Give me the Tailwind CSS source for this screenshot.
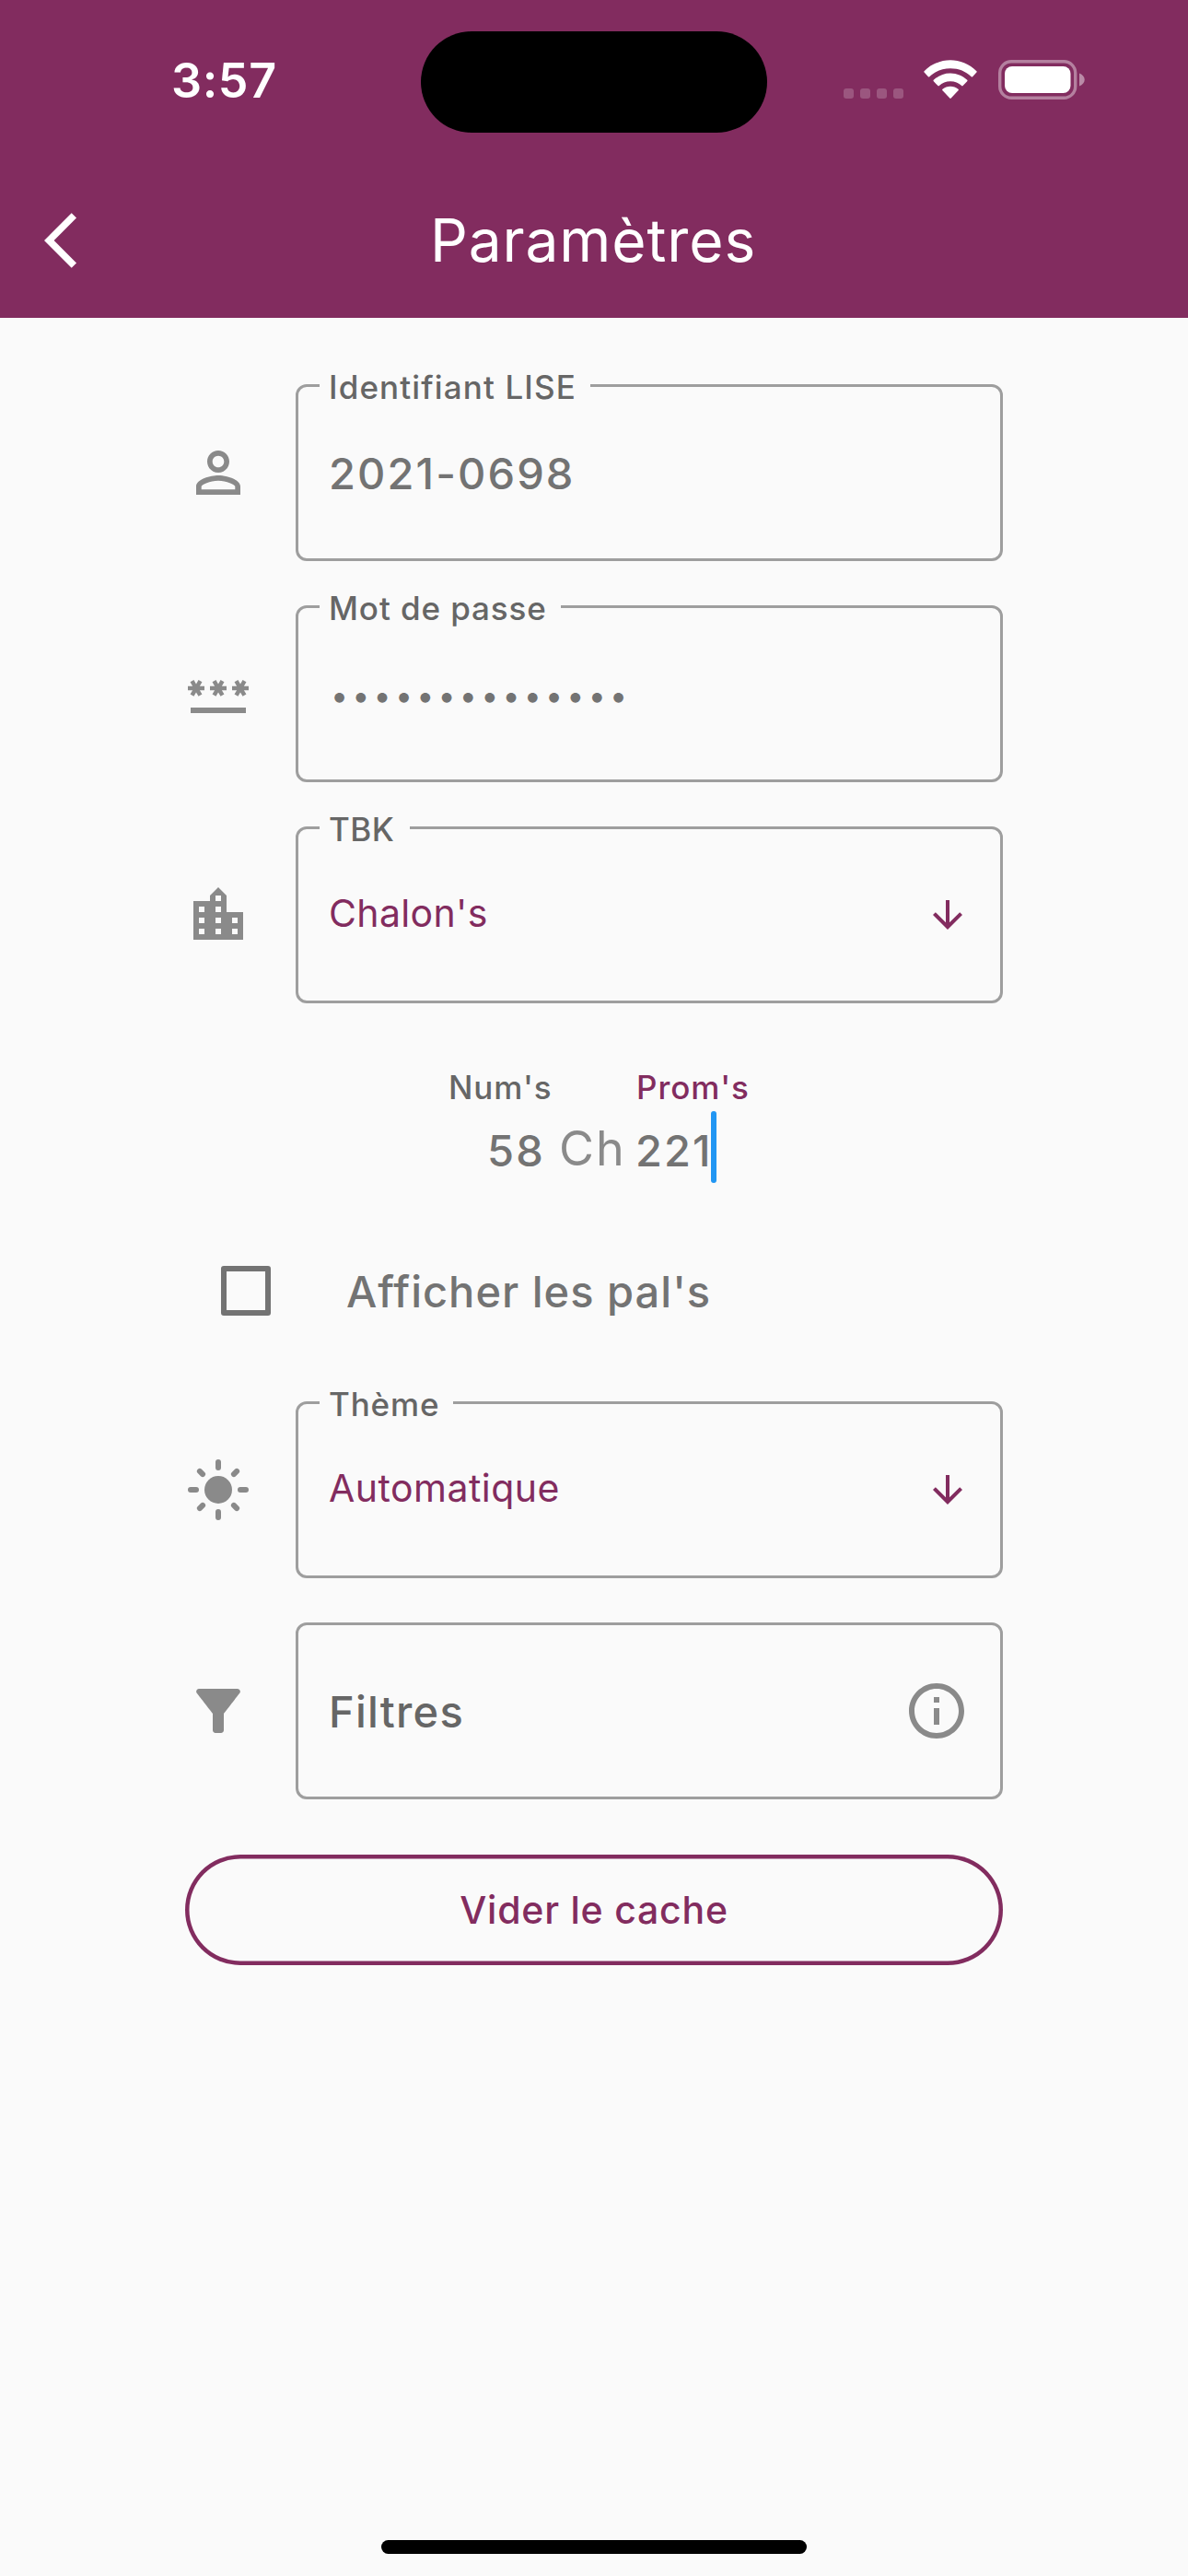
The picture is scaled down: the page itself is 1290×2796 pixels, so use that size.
<!DOCTYPE html>
<html lang="fr">
<head>
<meta charset="utf-8">
<title>Paramètres</title>
<script src="https://cdn.jsdelivr.net/npm/@tailwindcss/browser@4"></script>
</head>
<body class="bg-[#fafafa] font-['Inter',sans-serif] text-[#737373]">
<div class="relative flex h-[2796px] w-[1290px] flex-col overflow-hidden">
  <header class="h-[345px] shrink-0 bg-[#822c5f] text-white">
    <!-- Status bar -->
    <div class="flex h-[177px] items-start">
      <div class="mt-[62px] w-[271px] pl-[186px] text-[52px] font-semibold leading-none tracking-[0.6px]">3:57</div>
      <div class="ml-[186px] mt-[34px] h-[110px] w-[376px] rounded-full bg-black"></div>
      <div class="ml-[83px] mt-24 flex gap-[7px]">
        <i class="size-[11px] rounded-[3px] bg-white/20"></i>
        <i class="size-[11px] rounded-[3px] bg-white/20"></i>
        <i class="size-[11px] rounded-[3px] bg-white/20"></i>
        <i class="size-[11px] rounded-[3px] bg-white/20"></i>
      </div>
      <svg class="ml-[22px] mt-[65px] h-[42px] w-[58px]" viewBox="0 0 58 42" fill="#fff">
        <path d="M29 .2C19.200.2 8.200 4.300.6 12.200a1 1 0 0 0 0 1.400l4.300 4.600a1 1 0 0 0 1.400 0C12 12.500 20 9.200 29 9.200s17 3.300 22.700 9a1 1 0 0 0 1.400 0l4.300-4.600a1 1 0 0 0 0-1.400C49.800 4.300 38.800.2 29 .2z"/>
        <path d="M29 14.400c-7 0-13.400 2.800-18.200 7.400a1 1 0 0 0 0 1.400l4.600 4.900a1 1 0 0 0 1.400 0C20 25.100 24.300 23.300 29 23.300s9 1.800 12.200 4.800a1 1 0 0 0 1.400 0l4.600-4.900a1 1 0 0 0 0-1.400C42.400 17.200 36 14.400 29 14.400z"/>
        <path d="M29 28.700c-3.200 0-6.200 1.100-8.500 3.100a1 1 0 0 0 0 1.500L28.300 41.600a1 1 0 0 0 1.400 0l7.800-8.300a1 1 0 0 0 0-1.500C35.200 29.800 32.200 28.700 29 28.700z"/>
      </svg>
      <svg class="ml-[23px] mt-[65px] h-[43px] w-[94px]" viewBox="0 0 94 43">
        <rect x="1.700" y="1.700" width="82" height="39.600" rx="12.500" fill="none" stroke="#fff" stroke-opacity=".4" stroke-width="3.400"/>
        <rect x="7" y="7" width="71.500" height="29" rx="8" fill="#fff"/>
        <path d="M88 14.500c3.600 1.400 5.700 4 5.700 7s-2.100 5.600-5.700 7z" fill="#fff" fill-opacity=".45"/>
      </svg>
    </div>
    <!-- App bar -->
    <div class="flex h-[168px] items-center">
      <svg class="ml-12 size-[72px]" viewBox="0 0 24 24" fill="#fff"><path d="M11.670 3.870L9.900 2.100 0 12l9.900 9.900 1.770-1.770L3.540 12z"/></svg>
      <h1 class="ml-[347px] text-[64px] leading-none tracking-[0.88px]">Paramètres</h1>
    </div>
  </header>

  <main class="flex w-[1089px] flex-col pl-[201px] pt-[72px]">
    <div class="flex items-center gap-12">
      <svg class="size-[72px]" viewBox="0 0 24 24" fill="#8a8a8a"><path d="M12 5.900c1.160 0 2.100.940 2.100 2.100s-.940 2.100-2.100 2.100S9.900 9.160 9.900 8s.940-2.100 2.100-2.100m0 9c2.970 0 6.100 1.460 6.100 2.100v1.100H5.900V17c0-.640 3.130-2.100 6.100-2.100M12 4C9.790 4 8 5.790 8 8s1.790 4 4 4 4-1.790 4-4-1.790-4-4-4zm0 9c-2.670 0-8 1.340-8 4v3h16v-3c0-2.660-5.330-4-8-4z"/></svg>
      <div class="relative h-[192px] w-[768px] rounded-xl border-3 border-[#9e9e9e] pl-[33px] pt-[70px]">
        <label class="absolute -top-[17px] left-[23px] w-[294px] bg-[#fafafa] pl-[10px] text-[35px] font-medium leading-none tracking-[1.13px] text-[#666]">Identifiant LISE</label>
        <div class="text-[47px] font-medium leading-none tracking-[2.1px]">2021-0698</div>
      </div>
    </div>

    <div class="mt-12 flex items-center gap-12">
      <svg class="size-[72px]" viewBox="0 0 24 24" fill="#8a8a8a"><path d="M2 17h20v2H2zM3.150 12.950L4 11.470l.850 1.480 1.300-.750-.850-1.480H7v-1.500H5.300l.850-1.470L4.850 7 4 8.470 3.150 7l-1.300.750.850 1.470H1v1.500h1.700l-.850 1.480zM11.150 12.950l.850-1.480.850 1.480 1.300-.750-.850-1.480H15v-1.500h-1.700l.850-1.470L12.850 7 12 8.470 11.150 7l-1.300.750.850 1.470H9v1.500h1.700l-.850 1.480zM19.150 12.950l.850-1.480.850 1.480 1.300-.750-.850-1.480H23v-1.500h-1.700l.850-1.470L20.850 7 20 8.470 19.150 7l-1.300.750.850 1.470H17v1.500h1.700l-.850 1.480z"/></svg>
      <div class="relative h-[192px] w-[768px] rounded-xl border-3 border-[#9e9e9e] pl-[35px] pt-[78px]">
        <label class="absolute -top-[17px] left-[23px] w-[262px] bg-[#fafafa] pl-[10px] text-[35px] font-medium leading-none tracking-[0.9px] text-[#666]">Mot de passe</label>
        <div class="text-[34px] leading-none tracking-[4.18px]">••••••••••••••</div>
      </div>
    </div>

    <div class="mt-12 flex items-center gap-12">
      <svg class="size-[72px]" viewBox="0 0 24 24" fill="#8a8a8a"><path d="M15 11V5l-3-3-3 3v2H3v14h18V11h-6zm-8 8H5v-2h2v2zm0-4H5v-2h2v2zm0-4H5V9h2v2zm6 8h-2v-2h2v2zm0-4h-2v-2h2v2zm0-4h-2V9h2v2zm0-4h-2V5h2v2zm6 12h-2v-2h2v2zm0-4h-2v-2h2v2z"/></svg>
      <div class="relative flex h-[192px] w-[768px] items-start justify-between rounded-xl border-3 border-[#9e9e9e] px-[33px] text-[#822c5f]">
        <label class="absolute -top-[17px] left-[23px] w-[98px] bg-[#fafafa] pl-[10px] text-[35px] font-medium leading-none tracking-[0.4px] text-[#666]">TBK</label>
        <div class="mt-[71px] text-[41px] leading-none tracking-[0.35px]">Chalon's</div>
        <svg class="mt-[69px] size-12" viewBox="0 0 24 24" fill="currentColor"><path d="M20 12l-1.410-1.410L13 16.170V4h-2v12.170l-5.580-5.590L4 12l8 8 8-8z"/></svg>
      </div>
    </div>

    <!-- Num's / Prom's -->
    <div class="mt-[74px] flex pl-[286px] text-[35px] font-medium leading-none">
      <label class="w-[204px] tracking-[0.9px] text-[#666]">Num's</label>
      <label class="tracking-[0.96px] text-[#822c5f]">Prom's</label>
    </div>
    <div class="mt-2 flex h-[78px] items-start pl-[328px] text-[47px] font-medium leading-none">
      <div class="mt-[19px] w-[78px] tracking-[2.1px]">58</div>
      <div class="mt-[15px] w-[83px] text-[52px] font-normal tracking-[2px] text-[#8a8a8a]">Ch</div>
      <div class="mt-[19px] w-[82px] tracking-[2px]">221</div>
      <div class="h-[78px] w-1.5 rounded-full bg-[#2196f3]"></div>
    </div>

    <div class="mt-[90px] flex h-[54px] items-start pl-[39px]">
      <div class="size-[54px] rounded-[3px] border-6 border-[#737373]"></div>
      <div class="ml-[82px] mt-1 text-[47px] font-medium leading-none tracking-[1.01px]">Afficher les pal's</div>
    </div>

    <div class="mt-[93px] flex items-center gap-12">
      <svg class="size-[72px]" viewBox="0 0 24 24" fill="#8a8a8a" stroke="#8a8a8a" stroke-width="2" stroke-linecap="round"><circle cx="12" cy="12" r="5" stroke="none"/><path d="M12 2v2M12 20v2M2 12h2M20 12h2M5.300 5.300l1.060 1.060M17.640 17.640l1.060 1.060M5.300 18.700l1.060-1.060M17.640 6.360l1.060-1.060"/></svg>
      <div class="relative flex h-[192px] w-[768px] items-start justify-between rounded-xl border-3 border-[#9e9e9e] px-[33px] text-[#822c5f]">
        <label class="absolute -top-[17px] left-[23px] w-[145px] bg-[#fafafa] pl-[10px] text-[35px] font-medium leading-none tracking-[0.85px] text-[#666]">Thème</label>
        <div class="mt-[71px] text-[41px] leading-none tracking-[0.48px]">Automatique</div>
        <svg class="mt-[69px] size-12" viewBox="0 0 24 24" fill="currentColor"><path d="M20 12l-1.410-1.410L13 16.170V4h-2v12.170l-5.580-5.590L4 12l8 8 8-8z"/></svg>
      </div>
    </div>

    <div class="mt-12 flex items-center gap-12">
      <svg class="size-[72px]" viewBox="0 0 24 24" fill="#8a8a8a"><path d="M4.250 5.610C6.270 8.200 10 13 10 13v6c0 .550.450 1 1 1h2c.550 0 1-.450 1-1v-6s3.720-4.800 5.740-7.390A.998.998 0 0 0 18.950 4H5.040c-.830 0-1.300.950-.790 1.610z"/></svg>
      <div class="flex h-[192px] w-[768px] items-start justify-between rounded-xl border-3 border-[#9e9e9e] px-[33px]">
        <div class="mt-[70px] text-[47px] font-medium leading-none tracking-[1.25px] text-[#666]">Filtres</div>
        <svg class="mt-[57px] size-[72px]" viewBox="0 0 24 24" fill="#8a8a8a"><path d="M11 7h2v2h-2zm0 4h2v6h-2zm1-9C6.480 2 2 6.480 2 12s4.480 10 10 10 10-4.480 10-10S17.520 2 12 2zm0 18c-4.410 0-8-3.590-8-8s3.590-8 8-8 8 3.590 8 8-3.590 8-8 8z"/></svg>
      </div>
    </div>

    <button class="mt-[60px] flex h-[120px] w-full items-center justify-center rounded-full text-[41px] font-medium leading-none tracking-[0.77px] text-[#822c5f] shadow-[inset_0_0_0_4.5px_#822c5f]">Vider le cache</button>
  </main>

  <div class="mx-auto mb-6 mt-auto h-[15px] w-[462px] rounded-full bg-black"></div>
</div>
</body>
</html>
